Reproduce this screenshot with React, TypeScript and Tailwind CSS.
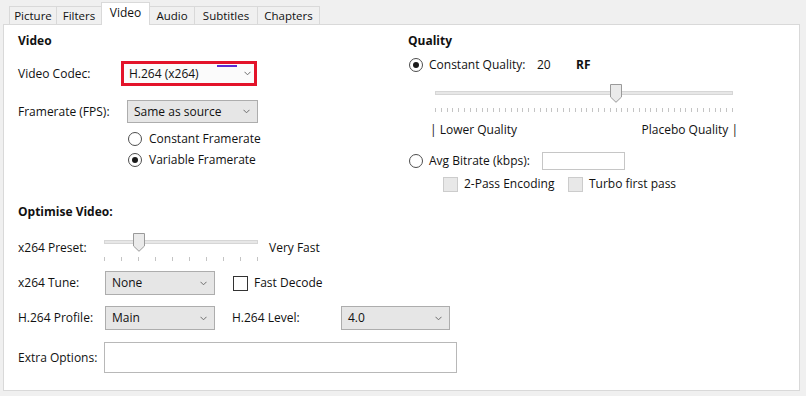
import React from "react";

const tabs = [
  { name: "Picture", w: "w-[48px]" },
  { name: "Filters", w: "w-[46px]" },
  { name: "Video", w: "w-[49px]", active: true },
  { name: "Audio", w: "w-[46px]" },
  { name: "Subtitles", w: "w-[64px]" },
  { name: "Chapters", w: "w-[63px]" },
];

function Chevron() {
  return (
    <svg width="7" height="5" viewBox="0 0 7 5" className="shrink-0">
      <path d="M0.5 0.8 L3.5 3.8 L6.5 0.8" fill="none" stroke="#6d6d6d" strokeWidth="1" />
    </svg>
  );
}

function Combo({ value, className }: { value: string; className: string }) {
  return (
    <div
      className={`flex shrink-0 items-center justify-between border border-[#adadad] bg-[#e6e6e6] pl-[6px] pr-[7px] ${className}`}
    >
      <span>{value}</span>
      <Chevron />
    </div>
  );
}

function Radio({ checked }: { checked?: boolean }) {
  return (
    <span className="flex h-[14px] w-[14px] shrink-0 items-center justify-center rounded-full border border-[#4d4d4d] bg-white">
      {checked && <span className="h-[6px] w-[6px] rounded-full bg-[#1a1a1a]" />}
    </span>
  );
}

function Thumb() {
  return (
    <svg width="12" height="19" viewBox="0 0 12 19">
      <path d="M0.5 0.5 H11.5 V13 L6 18.3 L0.5 13 Z" fill="#eaeaea" stroke="#9a9a9a" strokeWidth="1" />
    </svg>
  );
}

function Slider({
  width,
  ticks,
  pos,
}: {
  width: number;
  ticks: number;
  pos: number;
}) {
  const tickList = Array.from({ length: ticks }, (_, i) => (i * (width - 1)) / (ticks - 1));
  return (
    <div className="relative h-[30px] shrink-0" style={{ width }}>
      <div className="absolute left-0 right-0 top-[7px] h-[4px] border border-[#d6d6d6] bg-[#e7e7e7]" />
      <div className="absolute top-0" style={{ left: pos - 6 }}>
        <Thumb />
      </div>
      {tickList.map((x, i) => (
        <div
          key={i}
          className="absolute top-[24px] h-[4px] w-px bg-[#c4c4c4]"
          style={{ left: Math.round(x) }}
        />
      ))}
    </div>
  );
}

export default function App() {
  return (
    <div className="h-[396px] w-[806px] bg-[#f0f0f0] font-['Open_Sans',sans-serif] text-[12px] leading-[16px] text-[#111]">
      {/* Tab strip */}
      <div className="flex h-[24px] items-end pl-[10px]">
        {tabs.map((t) =>
          t.active ? (
            <div
              key={t.name}
              className={`relative z-10 -mb-px -ml-px flex h-[23px] items-center justify-center border border-b-0 border-[#d9d9d9] bg-white pb-[3px] ${t.w}`}
            >
              {t.name}
            </div>
          ) : (
            <div
              key={t.name}
              className={`-ml-px flex h-[18px] items-center justify-center border border-b-0 border-[#d9d9d9] bg-[#f0f0f0] text-[11.5px] ${t.w}`}
            >
              {t.name}
            </div>
          )
        )}
      </div>

      {/* Panel */}
      <div className="ml-[3px] flex h-[367px] w-[797px] border border-[#d9d9d9] bg-white pl-[14px] pt-[8px]">
        {/* Left column */}
        <div className="flex w-[390px] shrink-0 flex-col">
          <div className="h-[16px] font-bold">Video</div>

          <div className="mt-[12px] flex h-[25px] items-center">
            <span className="w-[103px] shrink-0">Video Codec:</span>
            <div className="relative flex h-[25px] w-[136px] shrink-0 border-[3px] border-[#e3132a] bg-white">
              <div className="flex flex-1 items-center justify-between bg-[#fbfbfb] pl-[5px] pr-[3px]">
                <span>H.264 (x264)</span>
                <Chevron />
              </div>
              <div className="absolute left-[93px] top-[1px] h-[2px] w-[20px] bg-[#5b2bd0]" />
            </div>
          </div>

          <div className="mt-[14px] flex h-[23px] items-center">
            <span className="w-[109px] shrink-0">Framerate (FPS):</span>
            <Combo value="Same as source" className="h-[23px] w-[131px]" />
          </div>

          <div className="ml-[110px] mt-[8px] flex h-[16px] items-center gap-[7px]">
            <Radio />
            <span>Constant Framerate</span>
          </div>
          <div className="ml-[110px] mt-[5px] flex h-[16px] items-center gap-[7px]">
            <Radio checked />
            <span>Variable Framerate</span>
          </div>

          <div className="mt-[36px] h-[16px] font-bold">Optimise Video:</div>

          <div className="mt-[13px] flex h-[29px] items-center">
            <span className="w-[86px] shrink-0">x264 Preset:</span>
            <div className="mt-[1px]">
              <Slider width={154} ticks={10} pos={35} />
            </div>
            <span className="ml-[11px]">Very Fast</span>
          </div>

          <div className="mt-[9px] flex h-[24px] items-center">
            <span className="w-[87px] shrink-0">x264 Tune:</span>
            <Combo value="None" className="h-[24px] w-[110px]" />
            <span className="ml-[18px] h-[15px] w-[15px] shrink-0 border border-[#333] bg-white" />
            <span className="ml-[6px]">Fast Decode</span>
          </div>

          <div className="mt-[11px] flex h-[24px] items-center">
            <span className="w-[87px] shrink-0">H.264 Profile:</span>
            <Combo value="Main" className="h-[24px] w-[110px]" />
            <span className="ml-[17px] w-[109px] shrink-0">H.264 Level:</span>
            <Combo value="4.0" className="h-[24px] w-[109px]" />
          </div>

          <div className="mt-[12px] flex h-[31px] items-center">
            <span className="w-[86px] shrink-0">Extra Options:</span>
            <div className="h-[31px] w-[353px] shrink-0 border border-[#b8b8b8] bg-white" />
          </div>
        </div>

        {/* Right column */}
        <div className="flex w-[340px] shrink-0 flex-col">
          <div className="h-[16px] font-bold">Quality</div>

          <div className="mt-[8px] flex h-[16px] items-center">
            <span className="ml-[1px]">
              <Radio checked />
            </span>
            <span className="ml-[6px] w-[108px] shrink-0">Constant Quality:</span>
            <span className="w-[39px] shrink-0">20</span>
            <span className="font-bold">RF</span>
          </div>

          <div className="ml-[27px] mt-[11px]">
            <Slider width={298} ticks={52} pos={181} />
          </div>

          <div className="ml-[22px] mt-[8px] flex h-[16px] w-[308px] items-center justify-between">
            <span>| Lower Quality</span>
            <span>Placebo Quality |</span>
          </div>

          <div className="mt-[14px] flex h-[18px] items-center">
            <span className="ml-[1px]">
              <Radio />
            </span>
            <span className="ml-[6px] w-[113px] shrink-0">Avg Bitrate (kbps):</span>
            <span className="h-[18px] w-[83px] shrink-0 border border-[#c6c6c6] bg-white" />
          </div>

          <div className="mt-[6px] flex h-[16px] items-center">
            <span className="ml-[35px] h-[15px] w-[15px] shrink-0 border border-[#cccccc] bg-[#e8e8e8]" />
            <span className="ml-[6px] w-[104px] shrink-0">2-Pass Encoding</span>
            <span className="h-[15px] w-[15px] shrink-0 border border-[#cccccc] bg-[#e8e8e8]" />
            <span className="ml-[6px]">Turbo first pass</span>
          </div>
        </div>
      </div>
    </div>
  );
}
